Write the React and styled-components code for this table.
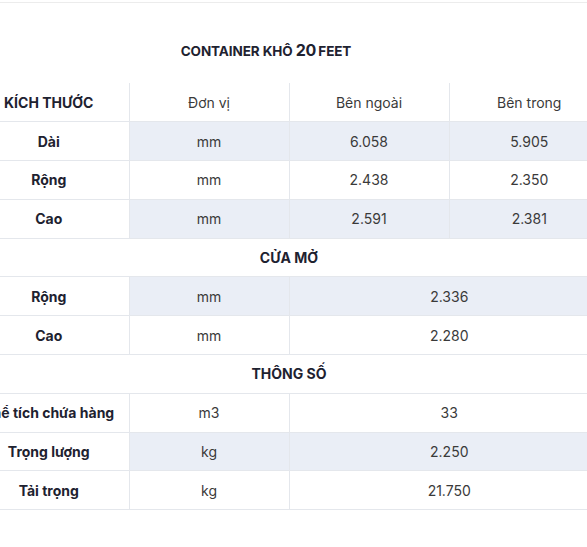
import React from 'react';
import styled, { createGlobalStyle } from 'styled-components';

const GlobalStyle = createGlobalStyle`
  html, body {
    margin: 0;
    padding: 0;
    background: #fff;
  }
  body {
    font-family: Inter, "Noto Sans", sans-serif;
    color: #2b2b2b;
    overflow: hidden;
  }
`;

const Page = styled.div`
  width: 587px;
  margin-top: 2px;
  border-top: 1px solid #ececec;
  overflow: hidden;
`;

const Title = styled.h2`
  margin: 0;
  padding: 38px 0 0 0;
  width: 532px;
  text-align: center;
  font-size: 13.5px;
  font-weight: 700;
  color: #1e2230;
  letter-spacing: -0.1px;
  line-height: 18px;

  span {
    font-size: 16px;
    margin-right: 2px;
  }
`;

const Table = styled.table`
  margin: 23px 0 0 -31px;
  width: 640px;
  border-collapse: collapse;
  table-layout: fixed;
  font-size: 14px;
`;

const Row = styled.tr`
  height: 38.8px;
  border-bottom: 1px solid #e4e7ec;

  &:nth-child(even) td {
    background: ${({ $plain }) => ($plain ? '#fff' : '#eaeef6')};
  }
`;

const HeadCell = styled.th`
  font-weight: ${({ $bold }) => ($bold ? 700 : 400)};
  color: ${({ $bold }) => ($bold ? '#1e2230' : '#3a3a3a')};
  text-align: center;
  padding: 0;
  border-left: 1px solid #e4e7ec;
  white-space: nowrap;
  &:first-child {
    border-left: none;
  }
`;

const LabelCell = styled.th`
  font-weight: 700;
  color: #1e2230;
  text-align: center;
  padding: 0;
  background: #fff;
  white-space: nowrap;
`;

const Cell = styled.td`
  text-align: center;
  padding: 0;
  color: #3a3a3a;
  border-left: 1px solid #e4e7ec;
`;

const SectionCell = styled.td`
  text-align: center;
  font-weight: 700;
  color: #1e2230;
  padding: 0;
`;

const dims = [
  ['Dài', 'mm', '6.058', '5.905'],
  ['Rộng', 'mm', '2.438', '2.350'],
  ['Cao', 'mm', '2.591', '2.381'],
];

const door = [
  ['Rộng', 'mm', '2.336'],
  ['Cao', 'mm', '2.280'],
];

const specs = [
  ['Thể tích chứa hàng', 'm3', '33'],
  ['Trọng lượng', 'kg', '2.250'],
  ['Tải trọng', 'kg', '21.750'],
];

export default function App() {
  return (
    <>
      <GlobalStyle />
      <Page>
        <Title>
          CONTAINER KHÔ <span>20</span>FEET
        </Title>
        <Table>
          <colgroup>
            <col style={{ width: 160 }} />
            <col style={{ width: 160 }} />
            <col style={{ width: 160 }} />
            <col style={{ width: 160 }} />
          </colgroup>
          <tbody>
            <Row>
              <HeadCell $bold>KÍCH THƯỚC</HeadCell>
              <HeadCell>Đơn vị</HeadCell>
              <HeadCell>Bên ngoài</HeadCell>
              <HeadCell>Bên trong</HeadCell>
            </Row>
            {dims.map(([label, unit, outer, inner]) => (
              <Row key={label}>
                <LabelCell>{label}</LabelCell>
                <Cell>{unit}</Cell>
                <Cell>{outer}</Cell>
                <Cell>{inner}</Cell>
              </Row>
            ))}
            <Row $plain>
              <SectionCell colSpan={4}>CỬA MỞ</SectionCell>
            </Row>
            {door.map(([label, unit, value]) => (
              <Row key={label}>
                <LabelCell>{label}</LabelCell>
                <Cell>{unit}</Cell>
                <Cell colSpan={2}>{value}</Cell>
              </Row>
            ))}
            <Row $plain>
              <SectionCell colSpan={4}>THÔNG SỐ</SectionCell>
            </Row>
            {specs.map(([label, unit, value]) => (
              <Row key={label}>
                <LabelCell>{label}</LabelCell>
                <Cell>{unit}</Cell>
                <Cell colSpan={2}>{value}</Cell>
              </Row>
            ))}
          </tbody>
        </Table>
      </Page>
    </>
  );
}
